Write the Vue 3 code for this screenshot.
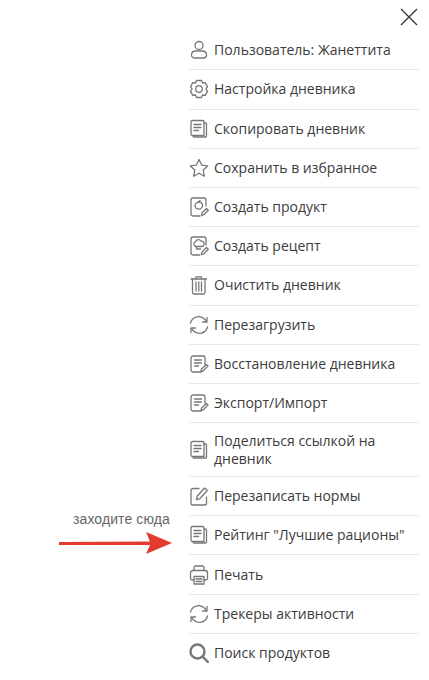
<template>
  <div class="page">
    <div class="note">заходите сюда</div>
    <svg class="arrow" width="114" height="24" viewBox="0 0 114 24">
      <path d="M0 11 L91 10.5 L87 1 L113 12 L87 23 L91 14 L0 14 Z" fill="#e53a30" />
    </svg>

    <div class="menu">
      <div class="close-row">
        <svg width="18" height="18" viewBox="0 0 18 18">
          <path d="M1 1 L17 17 M17 1 L1 17" stroke="#333" stroke-width="1.3" fill="none" />
        </svg>
      </div>
      <div v-for="item in items" :key="item.label" class="row">
        <svg class="icon" :class="{ bold: item.icon === 'search' }" width="20" height="20" viewBox="0 0 20 20">
          <path v-for="d in icons[item.icon]" :key="d" :d="d" />
        </svg>
        <span class="label">{{ item.label }}</span>
      </div>
    </div>
  </div>
</template>

<script setup>
const docStack = [
  'M2 3a1.5 1.5 0 0 1 1.5-1.5h10A1.5 1.5 0 0 1 15 3v13.5H3.5A1.5 1.5 0 0 1 2 15z',
  'M15 4h1.5a1 1 0 0 1 1 1v12a1 1 0 0 1-1 1H5a1 1 0 0 1-1-1',
  'M5 5.5h7 M5 8.5h7 M5 11.5h4.5'
]
const docPen = [
  'M12 18H4a2 2 0 0 1-2-2V4a2 2 0 0 1 2-2h10a2 2 0 0 1 2 2v7',
  'M5.5 6h7 M5.5 9h7 M5.5 12h4',
  'M12 17.5l.5-2.5 5-4.5 1.5 1.5-5 5z'
]
const refresh = [
  'M1.5 8A8.5 8.5 0 0 1 16 4.5l1.5 2',
  'M18 2.5V7h-4.5',
  'M18.5 12A8.5 8.5 0 0 1 4 15.5l-1.5-2',
  'M2 17.5V13h4.5'
]
const penCorner = 'M12.5 18.5l.5-2.5 4.5-4.5 1.8 1.8-4.5 4.5z'

const icons = {
  user: ['M10 1.5a4 4 0 1 1 0 8a4 4 0 1 1 0-8z', 'M6.5 11h7a4 4 0 0 1 4 3.5v.5a3 3 0 0 1-3 3h-9a3 3 0 0 1-3-3v-.5a4 4 0 0 1 4-3.500z'],
  gear: [
    'M7.5 1.5h5l1 2.5 2.7-.4 2.3 4-1.6 2.4 1.6 2.4-2.3 4-2.7-.4-1 2.5h-5l-1-2.5-2.7.4-2.3-4L3.100 10 1.500 7.600l2.300-4 2.700.4z',
    'M10 6.7a3.3 3.3 0 1 1 0 6.6a3.3 3.3 0 1 1 0-6.6z'
  ],
  stack: docStack,
  star: ['M10 1.5l2.6 5.6 6.1.8-4.5 4.2 1.2 6.1L10 15.2l-5.4 3 1.2-6.1L1.3 7.9l6.1-.8z'],
  product: [
    'M11 19H4a2 2 0 0 1-2-2V3a2 2 0 0 1 2-2h11a2 2 0 0 1 2 2v6',
    'M8 5.5c1.2-.6 2.8-.6 4 0a3.7 3.7 0 0 1 .8 5c-.8 1.2-2.3 1.8-3.300 1.300-1.500.5-3.500-1-3.500-3.300 0-1.300.7-2.400 2-3z',
    'M9.5 5.5l1.5-2',
    penCorner
  ],
  recipe: [
    'M11 19H4a2 2 0 0 1-2-2V3a2 2 0 0 1 2-2h11a2 2 0 0 1 2 2v6',
    'M7 10.5a2.5 2.5 0 0 1-.5-4.8 3 3 0 0 1 5.500-.5 2.500 2.500 0 0 1 1 5.300z',
    'M7.5 10.5V13h4',
    penCorner
  ],
  trash: [
    'M2 4h15.5',
    'M7 4V1.8h5.5V4',
    'M3.5 4v13.5A1.5 1.5 0 0 0 5 19h9.500a1.500 1.500 0 0 0 1.500-1.500V4',
    'M7 7v9 M9.750 7v9 M12.500 7v9'
  ],
  refresh,
  docPen,
  edit: [
    'M10 2.5H4a2 2 0 0 0-2 2V17a2 2 0 0 0 2 2h11.500a2 2 0 0 0 2-2v-6',
    'M7.5 13.5l.7-3.2L15.5 2l2.800 2.500-7.600 8.300z'
  ],
  printer: [
    'M5 5.5v-3A1.5 1.5 0 0 1 6.500 1h7A1.500 1.500 0 0 1 15 2.500v3',
    'M5 15H3a1.500 1.500 0 0 1-1.500-1.500V8A2.500 2.500 0 0 1 4 5.500h12A2.500 2.500 0 0 1 18.500 8v5.500A1.500 1.500 0 0 1 17 15h-2',
    'M5 11.5h10V19H5z',
    'M7 14h6 M7 16.5h6'
  ],
  search: ['M8.5 1.5a7 7 0 1 1 0 14a7 7 0 1 1 0-14z', 'M13.8 13.8l5 5']
}

const items = [
  { label: 'Пользователь: Жанеттита', icon: 'user' },
  { label: 'Настройка дневника', icon: 'gear' },
  { label: 'Скопировать дневник', icon: 'stack' },
  { label: 'Сохранить в избранное', icon: 'star' },
  { label: 'Создать продукт', icon: 'product' },
  { label: 'Создать рецепт', icon: 'recipe' },
  { label: 'Очистить дневник', icon: 'trash' },
  { label: 'Перезагрузить', icon: 'refresh' },
  { label: 'Восстановление дневника', icon: 'docPen' },
  { label: 'Экспорт/Импорт', icon: 'docPen' },
  { label: 'Поделиться ссылкой на дневник', icon: 'stack' },
  { label: 'Перезаписать нормы', icon: 'edit' },
  { label: 'Рейтинг "Лучшие рационы"', icon: 'stack' },
  { label: 'Печать', icon: 'printer' },
  { label: 'Трекеры активности', icon: 'refresh' },
  { label: 'Поиск продуктов', icon: 'search' }
]
</script>

<style>
html,
body {
  background: #fff;
}
</style>

<style scoped>
.page {
  position: relative;
  width: 429px;
  height: 680px;
  overflow: hidden;
  background: #fff;
  font-family: "Open Sans", sans-serif;
}

.note {
  position: absolute;
  left: 73px;
  top: 511px;
  font-family: "Liberation Sans", sans-serif;
  font-size: 14px;
  letter-spacing: 0.1px;
  line-height: 16px;
  color: #666;
}

.arrow {
  position: absolute;
  left: 59px;
  top: 531px;
}

.menu {
  margin-left: 189px;
  width: 230px;
  display: flex;
  flex-direction: column;
}

.close-row {
  height: 31.2px;
  padding-top: 8px;
  padding-right: 1px;
  display: flex;
  justify-content: flex-end;
  align-items: flex-start;
  box-sizing: border-box;
}

.row {
  box-sizing: border-box;
  min-height: 39.2px;
  padding: 8.5px 0;
  display: flex;
  align-items: center;
  gap: 5px;
  border-bottom: 1px solid #e6e6e6;
}

.row:last-child {
  border-bottom: 0;
}

.icon {
  flex-shrink: 0;
  fill: none;
  stroke: #777;
  stroke-width: 1.3;
  stroke-linecap: round;
  stroke-linejoin: round;
}

.icon.bold {
  stroke-width: 2.4;
}

.label {
  font-size: 14px;
  line-height: 18px;
  font-weight: 500;
  color: #3c3c3c;
}
</style>
